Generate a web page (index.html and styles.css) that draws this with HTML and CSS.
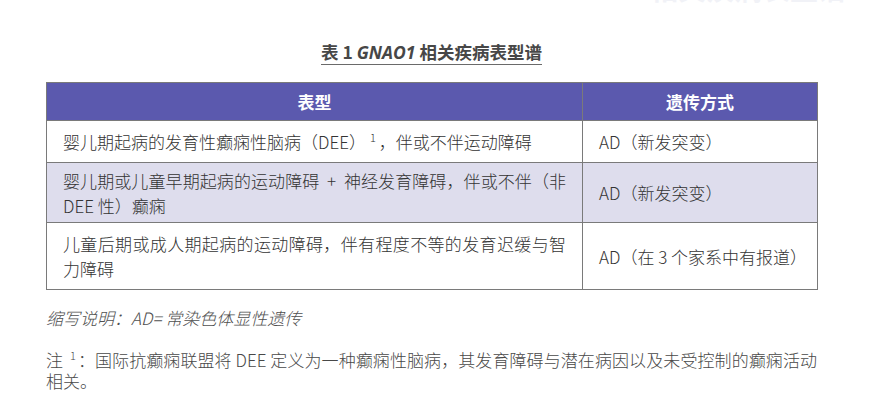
FILE: index.html
```html
<!DOCTYPE html>
<html lang="zh-CN">
<head>
<meta charset="utf-8">
<title>GNAO1 相关疾病表型谱</title>
<link rel="stylesheet" href="styles.css">
</head>
<body>
<div class="watermark">相关疾病表型谱</div>
<main class="page">
  <h1 class="title"><span>表 1 <i>GNAO1</i> 相关疾病表型谱</span></h1>
  <table class="pheno">
    <colgroup><col class="c1"><col class="c2"></colgroup>
    <thead>
      <tr><th>表型</th><th>遗传方式</th></tr>
    </thead>
    <tbody>
      <tr class="r1"><td>婴儿期起病的发育性癫痫性脑病（DEE）<sup>1</sup>，伴或不伴运动障碍</td><td>AD（新发突变）</td></tr>
      <tr class="r2 shade"><td>婴儿期或儿童早期起病的运动障碍&nbsp; +&nbsp; 神经发育障碍，伴或不伴（非 DEE 性）癫痫</td><td>AD（新发突变）</td></tr>
      <tr class="r3"><td>儿童后期或成人期起病的运动障碍，伴有程度不等的发育迟缓与智力障碍</td><td>AD（在 3 个家系中有报道）</td></tr>
    </tbody>
  </table>
  <p class="abbr">缩写说明：AD= 常染色体显性遗传</p>
  <p class="note">注 <sup>1</sup>：国际抗癫痫联盟将 DEE 定义为一种癫痫性脑病，其发育障碍与潜在病因以及未受控制的癫痫活动相关。</p>
</main>
</body>
</html>
```

FILE: styles.css
```css
html, body {
  margin: 0;
  padding: 0;
  background: #ffffff;
}
body {
  position: relative;
  width: 870px;
  height: 399px;
  overflow: hidden;
  font-family: "Noto Sans CJK SC", "Noto Sans", sans-serif;
  font-weight: 300;
  color: #444444;
}
.watermark {
  position: absolute;
  left: 650px;
  top: -32px;
  font-size: 28px;
  font-weight: 700;
  color: #f1f2f7;
  white-space: nowrap;
}
.page {
  padding: 37px 0 0 46px;
  width: 771px;
}
.title {
  margin: 0;
  text-align: center;
  font-size: 17.5px;
  font-weight: 700;
  line-height: 30px;
  color: #474747;
}
.title span {
  border-bottom: 1.5px solid #6a6a6a;
}
.title i {
  font-family: "Open Sans", "Noto Sans", sans-serif;
  font-style: italic;
  font-weight: 700;
}
.pheno {
  margin-top: 15px;
  width: 771px;
  border-collapse: collapse;
  table-layout: fixed;
  font-size: 17px;
  line-height: 25px;
}
.pheno col.c1 { width: 536px; }
.pheno col.c2 { width: 235px; }
.pheno th {
  background: #5b59ae;
  color: #ffffff;
  font-weight: 700;
  height: 37px;
  padding: 0;
  border: 1px solid #7a7a7a;
  border-bottom: none;
}
.pheno td {
  border: 1px solid #7a7a7a;
  padding: 0 16px;
  text-align: justify;
  vertical-align: middle;
  color: #333333;
}
.pheno tr.r1 td { height: 41px; }
.pheno tr.r2 td { height: 59px; }
.pheno tr.r3 td { height: 66px; }
.pheno tr.shade td { background: #dedded; }
.pheno sup, .note sup {
  font-size: 11px;
  line-height: 0;
  vertical-align: 7px;
  margin: 0 3px 0 4px;
}
.note sup { margin: 0 2px 0 3px; }
.abbr {
  margin: 16px 0 0 0;
  font-size: 17px;
  line-height: 24px;
  font-style: italic;
  color: #505050;
}
.note {
  margin: 19px 0 0 0;
  font-size: 17px;
  line-height: 21px;
  text-align: justify;
  color: #484848;
}
```
